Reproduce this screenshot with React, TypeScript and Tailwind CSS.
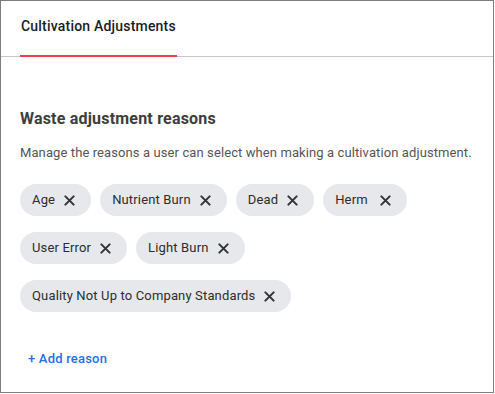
import React from "react";

const reasons = [
  ["Age", "Nutrient Burn", "Dead", "Herm"],
  ["User Error", "Light Burn"],
  ["Quality Not Up to Company Standards"],
];

function XIcon() {
  return (
    <svg width="11" height="11" viewBox="0 0 12 12" className="shrink-0">
      <path d="M1.5 1.5 L10.5 10.5 M10.5 1.5 L1.5 10.5" stroke="#333" strokeWidth="2.2" strokeLinecap="round" />
    </svg>
  );
}

export default function App() {
  return (
    <div className="w-[494px] h-[393px] border border-[#7d7d7d] bg-white text-[#333]" style={{ fontFamily: "Roboto, 'Liberation Sans', sans-serif" }}>
      <div className="flex items-end pl-[19px] border-b border-[#c6c6c6] h-[56px]">
        <div className="flex flex-col w-[157px]">
          <div className="whitespace-nowrap text-[14px] font-medium tracking-[0.2px] text-[#1b1b28] pl-px pb-[19px] leading-[20px]">Cultivation Adjustments</div>
          <div className="h-[2px] bg-[#ef3b4b] -mb-px" />
        </div>
      </div>
      <div className="px-[19px] pt-[51px]">
        <div className="whitespace-nowrap text-[16px] font-bold tracking-[0.2px] text-[#3d3d3d] leading-[22px]">Waste adjustment reasons</div>
        <div className="whitespace-nowrap text-[13px] tracking-[0.1px] text-[#555] leading-[18px] mt-[14px]">Manage the reasons a user can select when making a cultivation adjustment.</div>
        <div className="flex flex-col gap-[16px] mt-[22px]">
          {reasons.map((row, i) => (
            <div key={i} className="flex gap-[9px]">
              {row.map((r) => (
                <div key={r} className="h-[32px] rounded-full bg-[#e6e8eb] flex items-center pl-[12px] pr-[16px] gap-[9px] text-[13px] tracking-[0.15px] text-[#2d2d2d]">
                  <span className={r === "Herm" ? "pr-[3px]" : ""}>{r}</span>
                  <XIcon />
                </div>
              ))}
            </div>
          ))}
        </div>
        <div className="mt-[38px] pl-[8px] text-[13px] font-medium tracking-[0.2px] text-[#1f6fe0] leading-[18px]">+ Add reason</div>
      </div>
    </div>
  );
}
